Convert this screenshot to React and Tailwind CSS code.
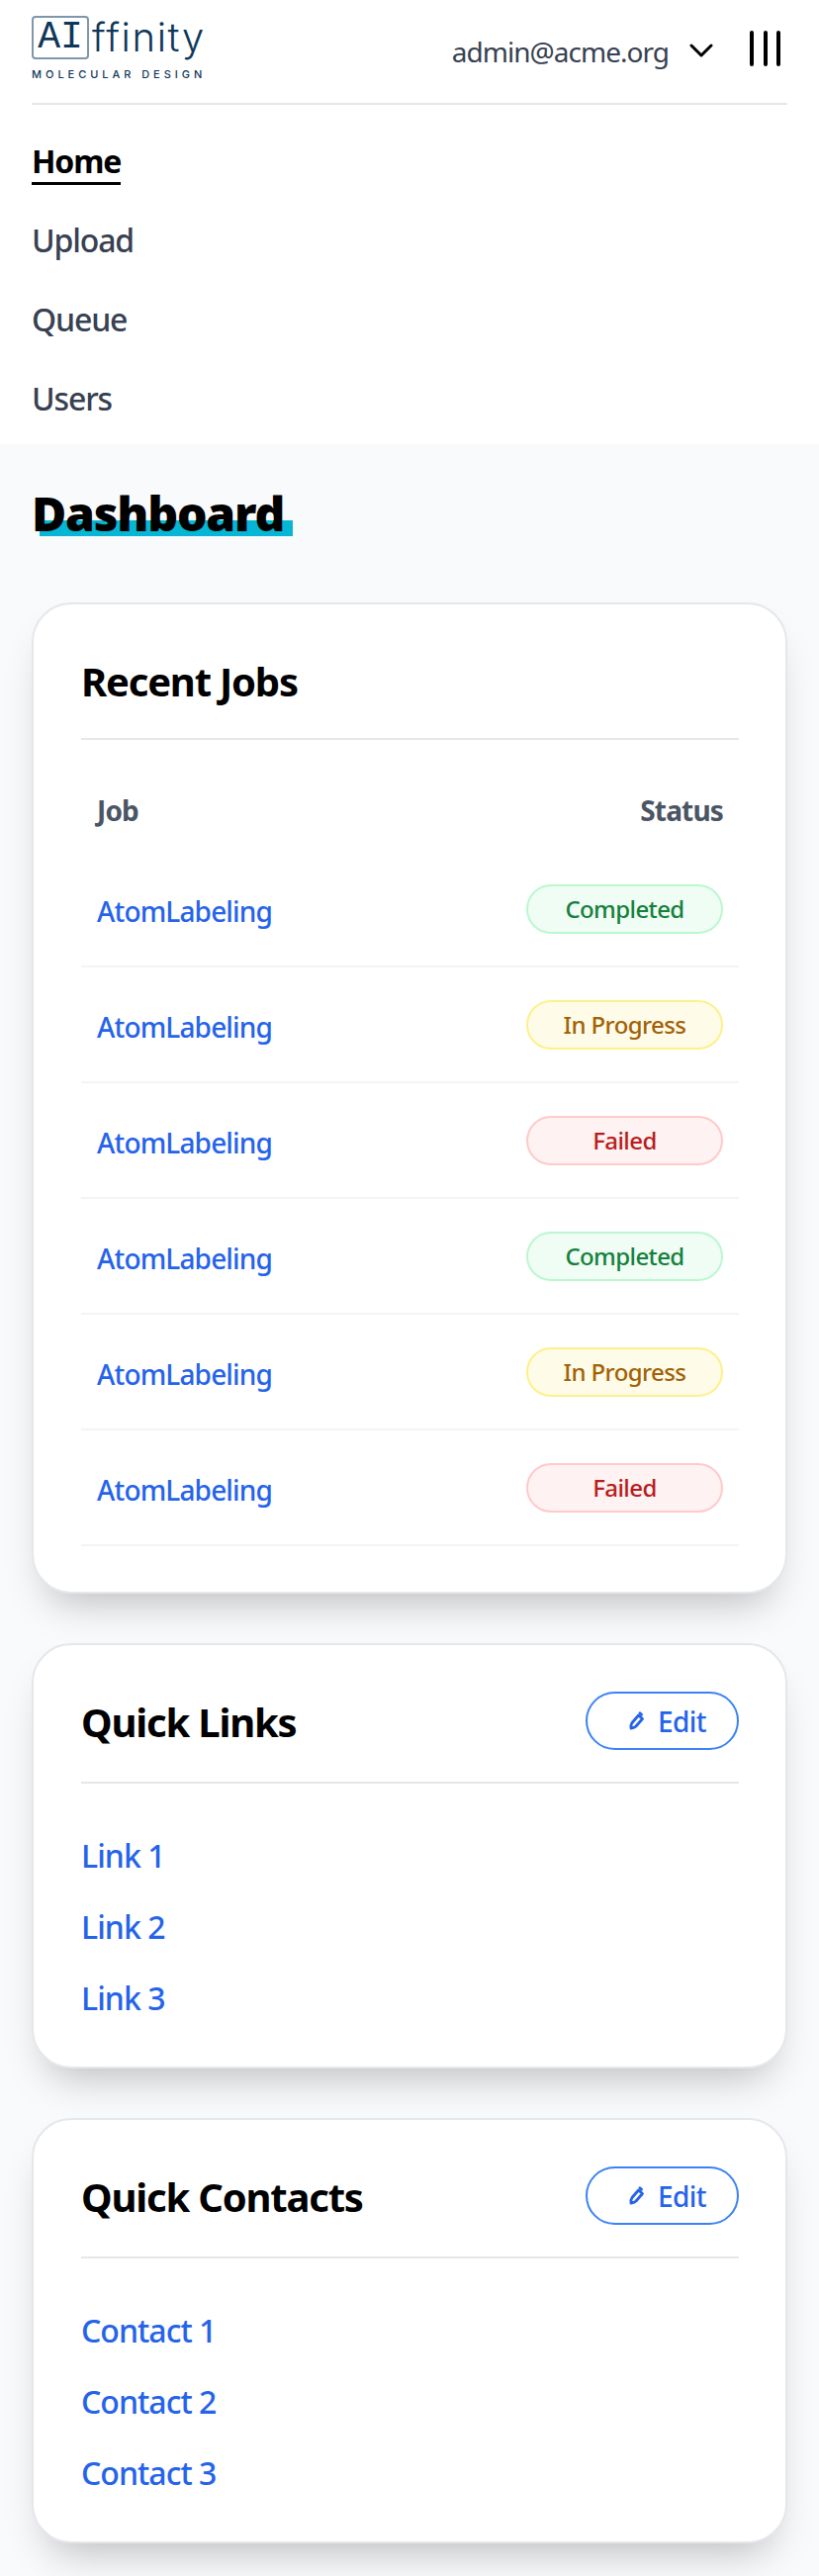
const rows = [
  ["Completed", "border-[#bbf7d0] bg-[#f0fdf4] text-[#15803d]"],
  ["In Progress", "border-[#fef08a] bg-[#fefce8] text-[#a16207]"],
  ["Failed", "border-[#fecaca] bg-[#fef2f2] text-[#b91c1c]"],
  ["Completed", "border-[#bbf7d0] bg-[#f0fdf4] text-[#15803d]"],
  ["In Progress", "border-[#fef08a] bg-[#fefce8] text-[#a16207]"],
  ["Failed", "border-[#fecaca] bg-[#fef2f2] text-[#b91c1c]"],
];

function PenIcon() {
  return (
    <svg width="16" height="19" viewBox="0 0 16 19" fill="none" stroke="#2563eb" strokeWidth="2.8" strokeLinejoin="round" strokeLinecap="round">
      <path d="M9.5 4 L13.5 7.5 L7 15 Q5.5 16.5 2 17 Q1.5 13.5 3 11.5 Z" />
      <path d="M11 1.8 L12.5 3.2" />
    </svg>
  );
}

function EditButton() {
  return (
    <button className="flex h-[59px] w-[155px] items-center rounded-full border-2 border-[#3b82f6] bg-white pl-[42px] text-[28px] font-medium tracking-[-0.02em] text-[#2563eb]">
      <PenIcon />
      <span className="ml-[13px] leading-none">Edit</span>
    </button>
  );
}

function Card({ title, action, children, pb, head }) {
  return (
    <section className={"rounded-[40px] border-2 border-[#e5e7eb] bg-white pt-[47px] pr-[47px] pl-[48px] shadow-[0_24px_40px_-16px_rgba(0,0,0,0.25)] " + pb}>
      <div className={"flex items-start justify-between border-b-2 border-[#e5e7eb] " + head}>
        <h2 className="mt-[5px] text-[40px] leading-[52px] font-bold tracking-[-0.03em] text-black">{title}</h2>
        {action}
      </div>
      {children}
    </section>
  );
}

function Links({ items }) {
  return (
    <ul className="flex flex-col gap-[24px] pt-[49px]">
      {items.map((x) => (
        <li key={x} className="text-[32px] leading-[48px] font-medium tracking-[-0.03em] text-[#2563eb]">{x}</li>
      ))}
    </ul>
  );
}

export default function App() {
  return (
    <div className="min-h-[2604px] bg-[#f9fafb] font-['Noto_Sans','Open_Sans',sans-serif]">
      <header className="bg-white px-[32px] pb-[22px]">
        <div className="flex h-[106px] items-start justify-between border-b-2 border-[#e5e7eb]">
          <div className="mt-[16px] flex w-[176px] flex-col text-[#10365a]">
            <div className="flex h-[44px] items-center">
              <span className="flex h-[44px] w-[58px] items-center justify-center rounded-[4px] border-2 border-[#7f97ab] font-['Liberation_Mono',monospace] text-[38px] leading-none">AI</span>
              <span className="ml-[3px] font-['Inter',sans-serif] text-[40px] leading-none font-light tracking-[0.04em]">ffinity</span>
            </div>
            <span className="mt-[9px] font-['Inter',sans-serif] text-[11px] leading-[12px] font-medium tracking-[0.36em] whitespace-nowrap">MOLECULAR DESIGN</span>
          </div>
          <div className="mt-[28px] flex items-center">
            <span className="text-[28px] leading-[48px] tracking-[-0.035em] text-[#374151]">admin@acme.org</span>
            <svg className="mb-[2px] ml-[21px]" width="24" height="14" viewBox="0 0 24 14" fill="none" stroke="#000" strokeWidth="3" strokeLinecap="round" strokeLinejoin="round">
              <path d="M2 2 L12 12 L22 2" />
            </svg>
            <svg className="mr-[6px] mb-[6px] ml-[37px]" width="32" height="38" viewBox="0 0 32 38" fill="none" stroke="#000" strokeWidth="4" strokeLinecap="round">
              <path d="M2 3 V35 M16 3 V35 M29 3 V35" />
            </svg>
          </div>
        </div>
        <nav className="flex flex-col pt-[35px] text-[32px] leading-[48px] font-medium tracking-[-0.035em] text-[#374151]">
          <a className="mb-[32px] w-fit border-b-[3px] border-black leading-[43px] font-bold text-black">Home</a>
          <a className="mb-[32px]">Upload</a>
          <a className="mb-[32px]">Queue</a>
          <a>Users</a>
        </nav>
      </header>
      <main className="px-[32px]">
        <h1 className="relative z-0 mt-[42px] mb-[62px] w-fit text-[48px] leading-[56px] font-black tracking-[-0.025em] text-black">
          <span className="absolute top-[35px] right-[-9px] left-[8px] -z-10 h-[16px] bg-[#06b6d4]"></span>
          Dashboard
        </h1>
        <div className="flex flex-col gap-[50px]">
          <Card title="Recent Jobs" pb="pb-[46px]" head="h-[90px]">
            <div className="flex h-[100px] items-center justify-between px-[16px] pt-[42px] text-[28px] font-bold tracking-[-0.03em] text-[#4b5563]">
              <span>Job</span><span>Status</span>
            </div>
            <div className="pt-[13px]">
              {rows.map(([label, cls], i) => (
                <div key={i} className="flex h-[117px] items-center justify-between border-b-2 border-[#f3f4f6] px-[16px]">
                  <span className="pt-[5px] text-[28px] font-medium tracking-[-0.03em] text-[#2563eb]">AtomLabeling</span>
                  <span className={"flex h-[50px] w-[199px] items-center justify-center rounded-full border-2 text-[24px] font-medium tracking-[-0.025em] " + cls}>{label}</span>
                </div>
              ))}
            </div>
          </Card>
          <Card title="Quick Links" action={<EditButton />} pb="pb-[45px]" head="h-[93px]">
            <Links items={["Link 1", "Link 2", "Link 3"]} />
          </Card>
          <Card title="Quick Contacts" action={<EditButton />} pb="pb-[45px]" head="h-[93px]">
            <Links items={["Contact 1", "Contact 2", "Contact 3"]} />
          </Card>
        </div>
      </main>
    </div>
  );
}
